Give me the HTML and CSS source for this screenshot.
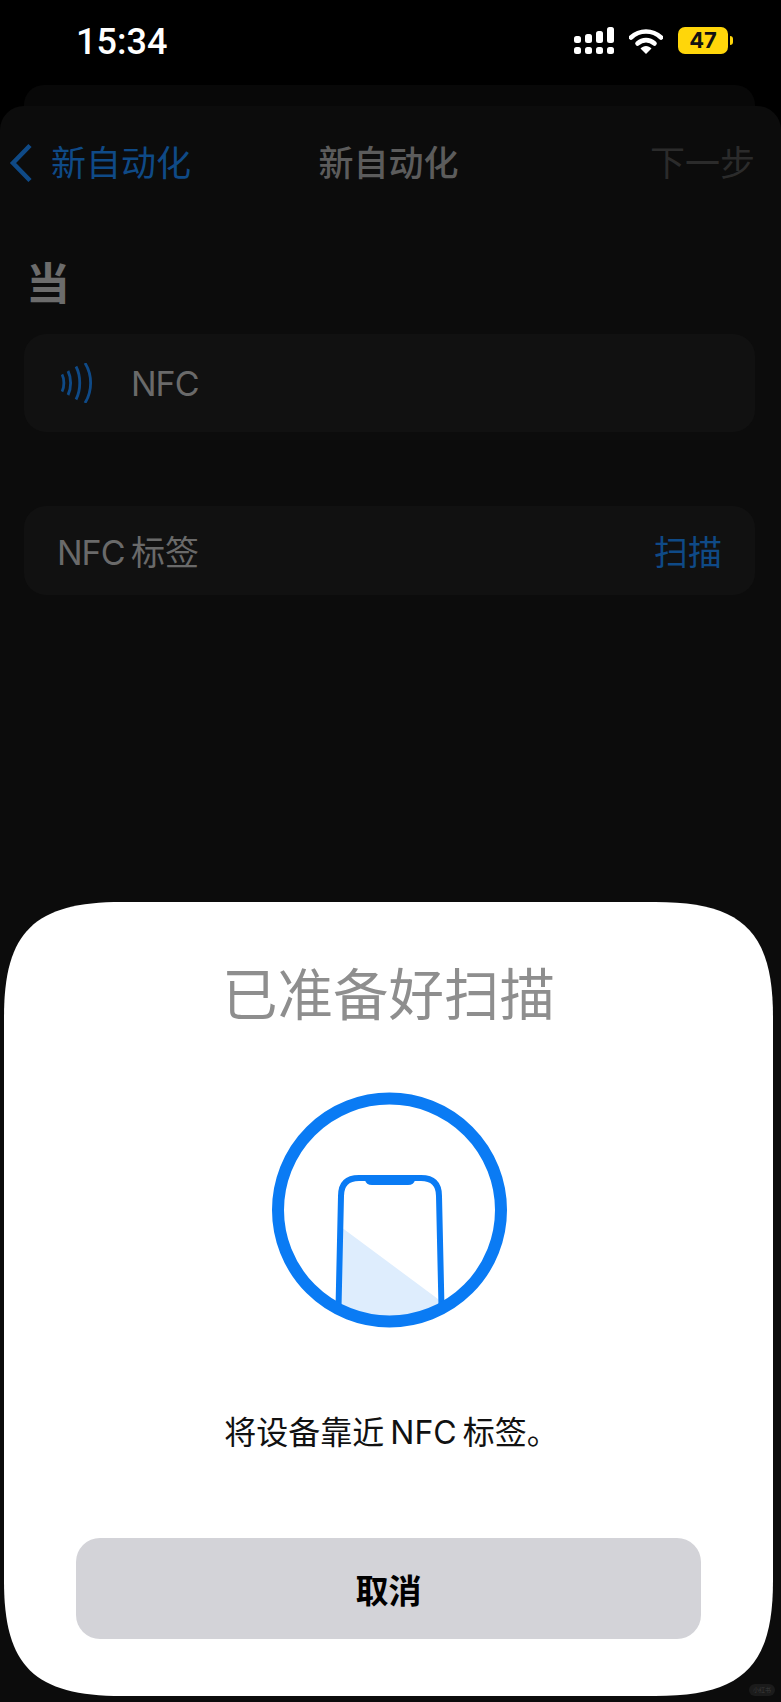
FILE: index.html
```html
<!DOCTYPE html>
<html lang="zh-CN">
<head>
  <meta charset="UTF-8" />
  <meta name="viewport" content="width=device-width, initial-scale=1.0"/>
  <title>新自动化</title>
  <link rel="stylesheet" href="styles.css">
</head>
<body>

  <div class="status-bar">
    <span class="time">15:34</span>
    <div class="status-icons">
      <svg class="signal" viewBox="0 0 40 28" width="40" height="28">
        <rect x="0" y="9" width="7" height="7" rx="2.5"></rect>
        <rect x="11" y="7" width="7" height="9" rx="2.5"></rect>
        <rect x="22" y="4" width="7" height="12" rx="2.5"></rect>
        <rect x="33" y="0" width="7" height="16" rx="2.5"></rect>
        <rect x="0" y="20" width="7" height="7" rx="2.5"></rect>
        <rect x="11" y="20" width="7" height="7" rx="2.5"></rect>
        <rect x="22" y="20" width="7" height="7" rx="2.5"></rect>
        <rect x="33" y="20" width="7" height="7" rx="2.5"></rect>
      </svg>
      <svg class="wifi" viewBox="0 0 34 26" width="34" height="26">
        <path d="M2 9.500C10.500 1.500 23.500 1.500 32 9.500" fill="none" stroke="#fff" stroke-width="4.600" stroke-linecap="round"></path>
        <path d="M8.500 15.500C13.500 11 20.500 11 25.500 15.500" fill="none" stroke="#fff" stroke-width="4.600" stroke-linecap="round"></path>
        <path d="M11.500 20.500C14.500 17 19.500 17 22.500 20.500L17 26Z" fill="#fff"></path>
      </svg>
      <div class="battery">
        <span class="battery-level">47</span>
        <span class="battery-tip"></span>
      </div>
    </div>
  </div>

  <div class="back-card"></div>

  <div class="screen">
    <div class="nav">
      <div class="nav-back">
        <svg viewBox="0 0 24 40" width="24" height="40">
          <path d="M21 2.500L4 20L21 37.500" fill="none" stroke="#0f4a87" stroke-width="4.500"></path>
        </svg>
        <span>新自动化</span>
      </div>
      <div class="nav-title">新自动化</div>
      <div class="nav-next">下一步</div>
    </div>

    <h2 class="section-title">当</h2>

    <div class="card trigger-card">
      <svg class="nfc-icon" viewBox="0 0 32 40" width="32" height="40">
        <path d="M1 11.500C3.500 16 3.500 24 1 28.500" fill="none" stroke="#0f4a87" stroke-width="2.800"></path>
        <path d="M7 8C10.500 15 10.500 25 7 32" fill="none" stroke="#0f4a87" stroke-width="2.800"></path>
        <path d="M15 3.500C20 13 20 27 15 36.500" fill="none" stroke="#0f4a87" stroke-width="2.800"></path>
        <path d="M24 0C31.500 12 31.500 28 24 40" fill="none" stroke="#0f4a87" stroke-width="2.800"></path>
      </svg>
      <span class="nfc-name">NFC</span>
    </div>

    <div class="card tag-card">
      <span class="tag-label"><span class="nfc-name">NFC</span> 标签</span>
      <span class="scan-link">扫描</span>
    </div>
  </div>

  <div class="sheet">
    <div class="sheet-title">已准备好扫描</div>
    <svg class="scan-graphic" viewBox="0 0 240 240" width="240" height="240">
      <defs>
        <clipPath id="ringClip"><circle cx="120" cy="120" r="108"></circle></clipPath>
      </defs>
      <g clip-path="url(#ringClip)">
        <path d="M72 137L173 212L173 240L69 240Z" fill="#deedfd"></path>
        <path d="M69 240L72 106Q72 88 90 88L152 88Q170 88 170 106L173 240" fill="none" stroke="#0a7bf4" stroke-width="6"></path>
        <path d="M95 86L147 86L146 90Q145 95 139 95L103 95Q97 95 96 90Z" fill="#0a7bf4"></path>
      </g>
      <circle cx="120.500" cy="120" r="111.500" fill="none" stroke="#0a7bf4" stroke-width="12"></circle>
    </svg>
    <div class="sheet-message">将设备靠近 NFC 标签。</div>
    <button class="cancel-btn" type="button">取消</button>
  </div>

  <span class="watermark">小红书</span>

</body>
</html>
```

FILE: styles.css
```css
html, body {
  margin: 0;
  padding: 0;
}

body {
  position: relative;
  width: 781px;
  height: 1702px;
  overflow: hidden;
  background-color: #000;
  font-family: Inter, "Noto Sans CJK SC", sans-serif;
}

/* status bar */
.status-bar {
  height: 85px;
  box-sizing: border-box;
  padding: 0 48px 2px 76px;
  display: flex;
  justify-content: space-between;
  align-items: center;
}

.time {
  color: #fff;
  font-size: 36px;
  font-weight: 500;
  font-family: Roboto, sans-serif;
}

.status-icons {
  display: flex;
  align-items: center;
  margin-bottom: 2px;
}

.signal {
  fill: #fff;
  margin-right: 15px;
}

.wifi {
  margin-right: 15px;
}

.battery {
  display: flex;
  align-items: center;
}

.battery-level {
  width: 50px;
  height: 27px;
  line-height: 27px;
  background-color: #ffd60a;
  border-radius: 7px;
  color: #111;
  font-size: 22px;
  font-weight: 700;
  text-align: center;
}

.battery-tip {
  width: 3px;
  height: 9px;
  margin-left: 2px;
  background-color: #ffd60a;
  border-radius: 0 3px 3px 0;
}

/* dimmed screen behind the sheet */
.back-card {
  height: 21px;
  margin: 0 26px 0 24px;
  background-color: #080808;
  border-radius: 20px 20px 0 0;
}

.screen {
  height: 1596px;
  box-sizing: border-box;
  padding-top: 30px;
  background-color: #0c0c0c;
  border-radius: 24px 24px 0 0;
}

.nav {
  height: 54px;
  padding: 0 26px 0 11px;
  display: grid;
  grid-template-columns: 1fr auto 1fr;
  align-items: center;
  font-size: 35px;
  line-height: 54px;
}

.nav-back {
  display: flex;
  align-items: center;
  gap: 18px;
  color: #0f4a87;
}

.nav-back svg {
  margin-left: -2px;
}

.nav-title {
  margin-left: 11px;
  color: #5c5c5c;
  font-weight: 500;
}

.nav-next {
  color: #2b2b2b;
  text-align: right;
}

.section-title {
  margin: 64px 0 0 26px;
  height: 61px;
  font-size: 44px;
  line-height: 61px;
  font-weight: 700;
  color: #6c6c6c;
}

.card {
  margin: 0 26px 0 24px;
  background-color: #111;
  border-radius: 22px;
  display: flex;
  align-items: center;
  color: #6a6a6a;
  font-size: 34px;
}

.nfc-name {
  letter-spacing: -1px;
}

.trigger-card {
  height: 98px;
  margin-top: 19px;
  padding-left: 37px;
  gap: 38px;
}

.tag-card {
  height: 89px;
  margin-top: 74px;
  padding: 0 33px 0 33px;
  justify-content: space-between;
}

.tag-label {
  word-spacing: -3px;
}

.scan-link {
  color: #0f4a87;
}

/* bottom sheet */
.sheet {
  position: absolute;
  left: 4px;
  top: 902px;
  width: 769px;
  height: 794px;
  box-sizing: border-box;
  padding-top: 61px;
  background-color: #fff;
  clip-path: path("M118 0H651C739 0 769 30 769 115V679C769 764 739 794 651 794H118C30 794 0 764 0 679V115C0 30 30 0 118 0Z");
  display: flex;
  flex-direction: column;
  align-items: center;
}

.sheet-title {
  height: 64px;
  color: #8e8e8e;
  font-size: 55.5px;
  line-height: 64px;
  font-weight: 400;
}

.scan-graphic {
  display: block;
  margin-top: 63px;
}

.sheet-message {
  margin-top: 81px;
  margin-left: 6px;
  height: 44px;
  color: #111;
  font-size: 32px;
  line-height: 44px;
  word-spacing: -3px;
}

.cancel-btn {
  width: 625px;
  height: 101px;
  margin-top: 83px;
  border: none;
  border-radius: 24px;
  background-color: #d3d3d8;
  color: #000;
  font-family: inherit;
  font-size: 33px;
  font-weight: 700;
}

.watermark {
  position: absolute;
  left: 749px;
  top: 1684px;
  padding: 0 4px;
  border-radius: 8px;
  background-color: #1b1b1b;
  color: #3a3a3a;
  font-size: 6px;
  line-height: 12px;
}
```
